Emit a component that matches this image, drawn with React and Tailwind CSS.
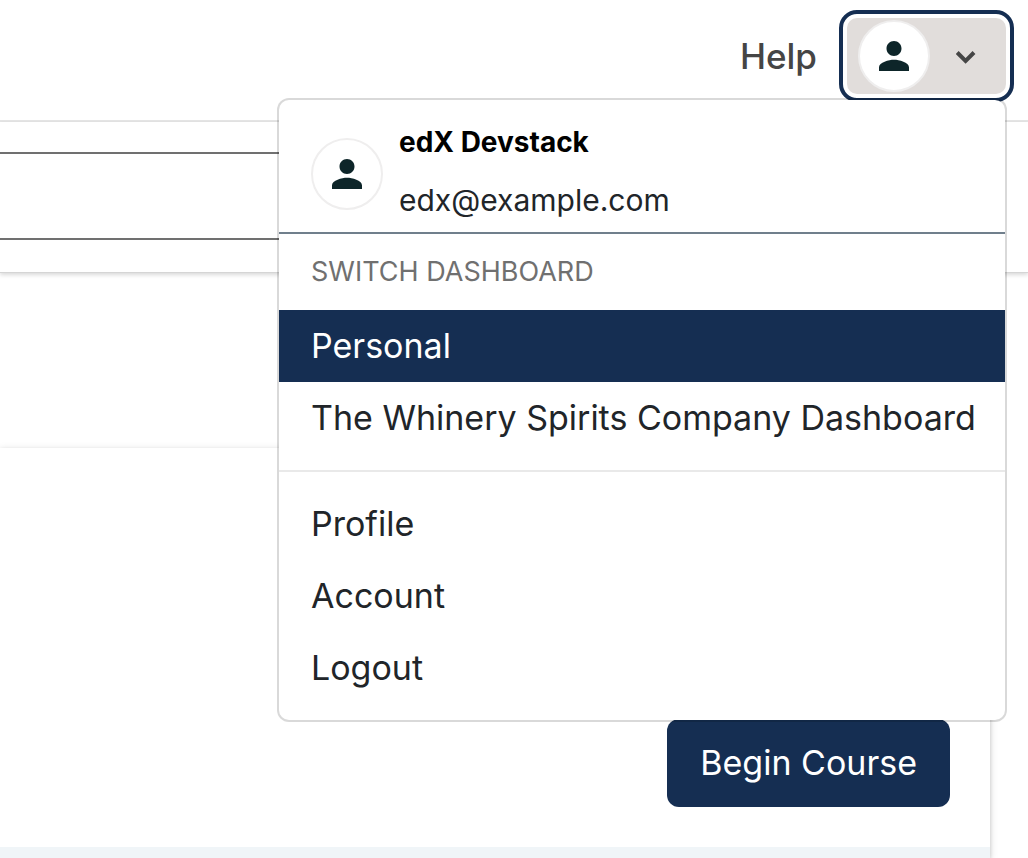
import React from "react";

function Avatar() {
  return (
    <span className="flex size-18 shrink-0 items-center justify-center rounded-full border-2 border-[#efeeee] bg-white">
      <svg viewBox="-0.267 -0.267 24.533 24.533" className="size-[46px] shrink-0 fill-[#0d2529]" aria-hidden="true">
        <path d="M12 12c2.21 0 4-1.79 4-4s-1.79-4-4-4-4 1.79-4 4 1.79 4 4 4zm0 2c-2.67 0-8 1.34-8 4v2h16v-2c0-2.66-5.33-4-8-4z" />
      </svg>
    </span>
  );
}

function MenuLink({ active, children }) {
  return (
    <a
      href="#"
      className={
        active
          ? "block bg-[#152e52] px-8 py-2 text-[34px] leading-[56px] text-white"
          : "block px-8 py-2 text-[34px] leading-[56px] text-[#212529]"
      }
    >
      {children}
    </a>
  );
}

function UserMenu() {
  return (
    <nav
      aria-label="User menu"
      className="absolute top-full -right-px z-10 mt-1 w-[730px] rounded-xl border-2 border-black/15 bg-white bg-clip-padding pb-4 whitespace-nowrap"
    >
      <div className="flex h-[134px] items-center gap-4 border-b-2 border-[#707f8c] px-8 pt-4">
        <Avatar />
        <div className="flex flex-col gap-4 pb-1.5">
          <strong className="text-[28px] leading-[42px] font-bold text-black">edX Devstack</strong>
          <span className="text-[30px] leading-[42px] text-[#212529]">edx@example.com</span>
        </div>
      </div>
      <h2 className="px-8 py-4 text-[27px] leading-[44px] text-[#707070] uppercase">Switch Dashboard</h2>
      <MenuLink active>Personal</MenuLink>
      <MenuLink>The Whinery Spirits Company Dashboard</MenuLink>
      <hr className="my-4 border-t-2 border-[#e9e9e9]" />
      <MenuLink>Profile</MenuLink>
      <MenuLink>Account</MenuLink>
      <MenuLink>Logout</MenuLink>
    </nav>
  );
}

export default function App() {
  return (
    <div className="flex min-h-screen flex-col overflow-hidden bg-white font-['Inter','Liberation_Sans',sans-serif]">
      <header className="flex h-[122px] items-start justify-end gap-[30px] border-b-2 border-[#e5e5e5] pt-[18px] pr-[22px]">
        <a href="#" className="text-[35px] leading-[76px] font-medium text-[#454545]">
          Help
        </a>
        <div className="relative">
          <button
            type="button"
            aria-label="Account menu"
            aria-expanded="true"
            className="flex h-[76px] items-center gap-[26px] rounded-[10px] bg-[#e1dddb] pr-[30px] pl-[11px] outline-4 outline-offset-4 outline-[#152e52]"
          >
            <Avatar />
            <svg viewBox="0 0 20 16" className="h-4 w-5 fill-none stroke-[#454545] stroke-[4]" aria-hidden="true">
              <path d="M1.2 4.5L9.6 12.9L18 4.5" />
            </svg>
          </button>
          <UserMenu />
        </div>
      </header>

      <section className="border-b border-[#d5d5d5] pt-[30px] pb-8 shadow-[0_2px_4px_rgba(0,0,0,0.15)]">
        <input
          type="search"
          aria-label="Search"
          className="block h-[88px] w-1/2 border-y-2 border-[#707070] bg-white px-4 text-[34px] outline-none"
        />
      </section>

      <main className="flex grow flex-col pt-[175px] pr-[38px]">
        <article className="flex grow flex-col bg-white shadow-[0_2px_4px_rgba(0,0,0,0.15),0_2px_8px_rgba(0,0,0,0.15)]">
          <div className="flex justify-end px-10 pt-[271px] pb-10">
            <button
              type="button"
              className="h-[88px] rounded-xl bg-[#152e52] px-[33px] text-[34px] leading-[56px] text-white"
            >
              Begin Course
            </button>
          </div>
          <div className="grow bg-[#f0f5f8]" />
        </article>
      </main>
    </div>
  );
}
